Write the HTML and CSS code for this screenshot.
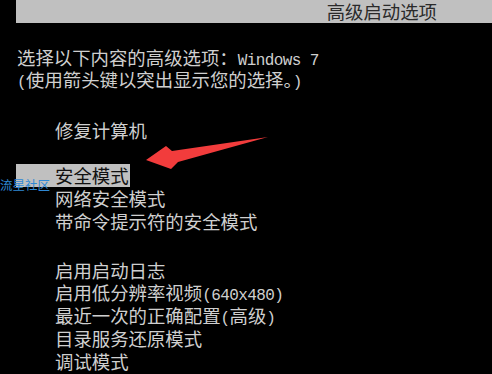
FILE: index.html
```html
<!DOCTYPE html>
<html lang="zh-CN">
<head>
<meta charset="utf-8">
<title>高级启动选项</title>
<link rel="stylesheet" href="styles.css">
</head>
<body>
<div class="screen">
  <div class="header">高级启动选项</div>
  <div class="intro">
    <div class="line">选择以下内容的高级选项：<span class="m">Windows 7</span></div>
    <div class="line"><span class="m">(</span>使用箭头键以突出显示您的选择。<span class="m">)</span></div>
  </div>
  <div class="menu group1">
    <div class="item">修复计算机</div>
    <div class="blank"></div>
    <div class="item selected">安全模式</div>
    <div class="item">网络安全模式</div>
    <div class="item">带命令提示符的安全模式</div>
  </div>
  <div class="menu group2">
    <div class="item">启用启动日志</div>
    <div class="item">启用低分辨率视频<span class="m">(640x480)</span></div>
    <div class="item">最近一次的正确配置<span class="m">(</span>高级<span class="m">)</span></div>
    <div class="item">目录服务还原模式</div>
    <div class="item">调试模式</div>
  </div>
  <div class="watermark">流星社区</div>
  <svg class="arrow" width="492" height="374" viewBox="0 0 492 374">
    <polygon points="146,160 166,146 172,151 268,137 178,162 171,169" fill="#f23c3c"/>
  </svg>
</div>
</body>
</html>
```
FILE: styles.css
```css
html, body {
  margin: 0;
  padding: 0;
  background: #000;
}
.screen {
  position: relative;
  width: 492px;
  height: 374px;
  overflow: hidden;
  background: #000;
  font-family: "Noto Sans CJK SC", "Noto Sans", sans-serif;
  font-size: 18.4px;
  color: #cfcfcf;
}
.header {
  margin-left: 16px;
  height: 23px;
  line-height: 23px;
  background: #c0c0c0;
  color: #2a2a2a;
  text-align: right;
  padding-right: 55px;
  white-space: nowrap;
}
.m {
  font-family: "Liberation Mono", "DejaVu Sans Mono", monospace;
  font-size: 16px;
  letter-spacing: -0.6px;
  line-height: 1;
}
.intro {
  margin-top: 22.6px;
  padding-left: 17px;
}
.line, .item, .blank {
  height: 22.75px;
  line-height: 22.75px;
  white-space: nowrap;
}
.group1 {
  margin-top: 27.5px;
}
.group2 {
  margin-top: 26.2px;
}
.item {
  padding-left: 55px;
}
.item.selected {
  margin-left: 16px;
  padding-left: 39px;
  padding-right: 1px;
  width: fit-content;
  background: #c0c0c0;
  color: #111;
}
.watermark {
  position: absolute;
  left: 0;
  top: 177px;
  font-size: 12.5px;
  line-height: 16px;
  color: #2f88d4;
}
.arrow {
  position: absolute;
  left: 0;
  top: 0;
}
```
